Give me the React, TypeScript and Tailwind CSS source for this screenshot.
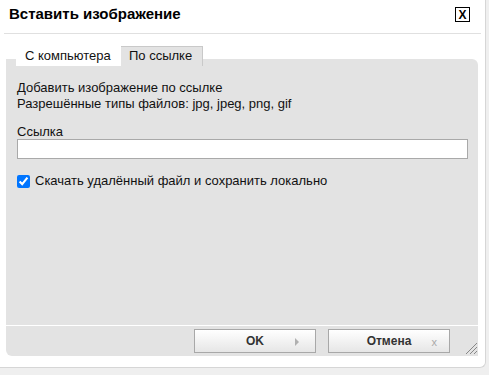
export default function App() {
  return (
    <div className="w-[489px] h-[375px] bg-[#efefef] overflow-hidden font-['Liberation_Sans',Arial,sans-serif] text-[#111]">
      <div className="w-[486px] h-[368px] bg-white border-r border-b border-[#d6d6d6] rounded-br-[6px] flex flex-col">
        {/* header */}
        <div className="mx-[4px] h-[34px] border-b border-[#e0e0e0] flex items-start justify-between">
          <h1 className="pl-[5px] pt-[4px] text-[15px] leading-[20px] font-bold text-black">
            Вставить изображение
          </h1>
          <button className="mt-[7px] mr-[11px] w-[15px] h-[15px] border border-black flex items-center justify-center text-[12px] leading-none font-bold text-black">
            X
          </button>
        </div>

        {/* tabs */}
        <div className="relative z-10 mt-[12px] pl-[16px] flex h-[20px] text-[13px] leading-[20px]">
          <div className="w-[105px] bg-white pl-[9px]">С компьютера</div>
          <div className="w-[82px] bg-[#e3e3e3] border-t border-r border-[#c9c9c9] pl-[8px] leading-[18px]">
            По ссылке
          </div>
        </div>

        {/* panel */}
        <div className="mx-[6px] -mt-[7px] w-[472px] h-[266px] bg-[#e3e3e3] rounded-tr-[6px] pl-[11px] pr-[10px] pt-[21px] text-[13px] leading-[16px]">
          <p>Добавить изображение по ссылке</p>
          <p>Разрешённые типы файлов: jpg, jpeg, png, gif</p>
          <label className="block mt-[12px]">Ссылка</label>
          <input
            type="text"
            className="-mt-[1px] block w-[451px] h-[20px] bg-white border border-[#a9a9a9] outline-none"
          />
          <label className="mt-[14px] flex items-center gap-[5px]">
            <input type="checkbox" defaultChecked className="m-0 w-[13px] h-[13px] accent-[#0075ff]" />
            <span>Скачать удалённый файл и сохранить локально</span>
          </label>
        </div>

        {/* footer */}
        <div className="relative mx-[6px] mt-[1px] w-[472px] h-[30px] bg-[#e3e3e3] rounded-bl-[6px] flex justify-end gap-[12px] pt-[3px] pr-[28px]">
          <button className="relative w-[122px] h-[24px] border border-[#a8a8a8] bg-gradient-to-b from-white to-[#e6e6e6] text-[12px] font-bold text-[#333]">
            OK
            <span className="absolute right-[16px] top-[8px] w-0 h-0 border-y-[4px] border-y-transparent border-l-[4px] border-l-[#b0b0b0]" />
          </button>
          <button className="relative w-[122px] h-[24px] border border-[#a8a8a8] bg-gradient-to-b from-white to-[#e6e6e6] text-[12px] font-bold text-[#333]">
            Отмена
            <span className="absolute right-[12px] top-[4px] text-[11px] font-normal text-[#aaa]">x</span>
          </button>
          <svg className="absolute right-0 bottom-[1px]" width="13" height="13" viewBox="0 0 13 13">
            <path d="M12 1 L1 12 M12 5 L5 12 M12 9 L9 12" stroke="#888" strokeWidth="1" />
          </svg>
        </div>
      </div>
    </div>
  );
}
